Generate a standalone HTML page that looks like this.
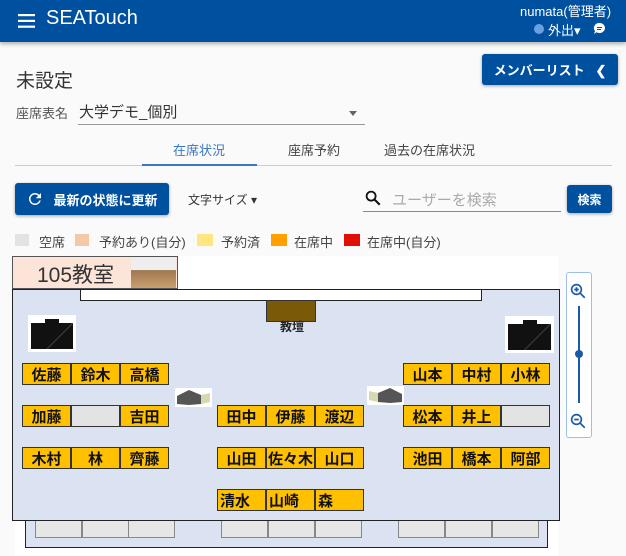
<!DOCTYPE html>
<html><head><meta charset="utf-8"><style>
*{margin:0;padding:0;box-sizing:border-box}
body{width:626px;height:556px;overflow:hidden;background:#fafafa;font-family:"Liberation Sans","Noto Sans CJK JP",sans-serif;position:relative;color:#333}
.a{position:absolute}
.hdr{left:0;top:0;width:626px;height:42px;background:#0050a0;box-shadow:0 2px 4px rgba(0,0,0,.3)}
.btn{background:#0050a0;color:#fff;border-radius:3px;box-shadow:0 1px 3px rgba(0,0,0,.35);font-weight:bold;display:flex;align-items:center;justify-content:center}
.seat{position:absolute;height:22px;width:49px;background:#ffc000;border:1.5px solid #333;font-weight:bold;font-size:15px;color:#111;display:flex;align-items:center;justify-content:center}
.e{background:#e3e3e3}
.lg{position:absolute;top:234px;width:14px;height:12px}
.lt{position:absolute;top:232px;font-size:13px;color:#444}
.bs{position:absolute;height:18px;width:47px;background:#e6e6e6;border:1px solid #888}
.proj{position:absolute;width:37px;height:19px;background:#fff}
</style></head><body>
<div class="a hdr"></div>
<svg class="a" style="left:18px;top:14px" width="17" height="14"><rect y="0" width="17" height="2.2" fill="#fff"/><rect y="5.8" width="17" height="2.2" fill="#fff"/><rect y="11.6" width="17" height="2.2" fill="#fff"/></svg>
<div class="a" style="left:46px;top:7px;color:#fff;font-size:20px">SEATouch</div>
<div class="a" style="left:520px;top:1px;color:#fff;font-size:13px">numata(管理者)</div>
<div class="a" style="left:534px;top:24px;width:10px;height:10px;border-radius:50%;background:#6aa0e0"></div>
<div class="a" style="left:548px;top:20px;color:#fff;font-size:13px">外出▾</div>
<svg class="a" style="left:593px;top:22px" width="13" height="13" viewBox="0 0 13 13"><path d="M6.5 1a5.5 5 0 1 1-3 9.2L1 12l1-3A5.5 5 0 0 1 6.5 1z" fill="#fff"/><path d="M4 5.5h5M4 7.5h4" stroke="#0050a0" stroke-width="1"/></svg>

<div class="a" style="left:16px;top:66px;font-size:19px;color:#333">未設定</div>
<div class="a btn" style="left:482px;top:54px;width:136px;height:31px;font-size:13px">メンバーリスト&nbsp;&nbsp;&nbsp;❮</div>

<div class="a" style="left:16px;top:103px;font-size:13px;color:#555">座席表名</div>
<div class="a" style="left:79px;top:101px;font-size:15px;color:#333">大学デモ_個別</div>
<div class="a" style="left:349px;top:111px;border:4px solid transparent;border-top:5px solid #666"></div>
<div class="a" style="left:78px;top:124px;width:287px;height:1px;background:#999"></div>

<div class="a" style="left:173px;top:140px;font-size:13px;color:#3a78c0">在席状況</div>
<div class="a" style="left:288px;top:140px;font-size:13px;color:#444">座席予約</div>
<div class="a" style="left:384px;top:140px;font-size:13px;color:#444">過去の在席状況</div>
<div class="a" style="left:15px;top:165px;width:597px;height:1px;background:#ccc"></div>
<div class="a" style="left:142px;top:164px;width:115px;height:2px;background:#3a78c0"></div>

<div class="a btn" style="left:15px;top:183px;width:154px;height:32px;font-size:13px">
<svg width="18" height="18" viewBox="0 0 24 24" style="margin-right:9px"><path d="M17.65 6.35A7.96 7.96 0 0 0 12 4a8 8 0 1 0 7.73 10h-2.08A6 6 0 1 1 12 6c1.66 0 3.14.69 4.22 1.78L13 11h7V4z" fill="#fff"/></svg>最新の状態に更新</div>
<div class="a" style="left:188px;top:191px;font-size:12px;color:#333">文字サイズ ▾</div>
<svg class="a" style="left:364px;top:189px" width="18" height="18" viewBox="0 0 24 24"><circle cx="9.5" cy="9.5" r="6" fill="none" stroke="#111" stroke-width="2.4"/><path d="M14 14l7 7" stroke="#111" stroke-width="2.8"/></svg>
<div class="a" style="left:392px;top:189px;font-size:15px;color:#aaa">ユーザーを検索</div>
<div class="a" style="left:363px;top:211px;width:198px;height:1px;background:#888"></div>
<div class="a btn" style="left:567px;top:185px;width:45px;height:28px;font-size:12px">検索</div>

<div class="lg" style="left:15px;background:#e3e3e3"></div>
<div class="lt" style="left:39px">空席</div>
<div class="lg" style="left:75px;background:#f5c8a8"></div>
<div class="lt" style="left:99px">予約あり(自分)</div>
<div class="lg" style="left:197px;background:#ffe680;width:16px"></div>
<div class="lt" style="left:221px">予約済</div>
<div class="lg" style="left:271px;background:#ffa000;width:16px"></div>
<div class="lt" style="left:294px">在席中</div>
<div class="lg" style="left:344px;background:#e01000;width:16px"></div>
<div class="lt" style="left:367px">在席中(自分)</div>

<div class="a" style="left:15px;top:256px;width:543px;height:300px;background:#fff"></div>
<div class="a" style="left:25px;top:500px;width:523px;height:48px;background:#dbe3f3;border:1.5px solid #222"></div>
<div class="bs" style="left:35px;top:520px"></div><div class="bs" style="left:82px;top:520px"></div><div class="bs" style="left:128px;top:520px"></div>
<div class="bs" style="left:221px;top:520px"></div><div class="bs" style="left:268px;top:520px"></div><div class="bs" style="left:315px;top:520px"></div>
<div class="bs" style="left:398px;top:520px"></div><div class="bs" style="left:445px;top:520px"></div><div class="bs" style="left:492px;top:520px"></div>

<div class="a" style="left:12px;top:256px;width:166px;height:33px;background:#fde4d8;border:1px solid #555"></div>
<div class="a" style="left:37px;top:259px;font-size:21px;color:#333">105教室</div>
<div class="a" style="left:131px;top:258px;width:45px;height:30px;background:linear-gradient(#eee 40%,#a07850 41%,#c8a070)"></div>

<div class="a" style="left:12px;top:289px;width:548px;height:232px;background:#dbe3f3;border:1.5px solid #222"></div>
<div class="a" style="left:80px;top:289px;width:402px;height:12px;background:#fff;border:1.5px solid #222"></div>
<div class="a" style="left:266px;top:300px;width:50px;height:22px;background:#7a5a08;border:1px solid #333"></div>
<div class="a" style="left:280px;top:318px;font-size:12px;font-weight:bold;color:#222">教壇</div>

<div class="a" style="left:28px;top:315px;width:48px;height:37px;background:#fff"></div>
<div class="a" style="left:31px;top:323px;width:42px;height:26px;background:linear-gradient(135deg,#111 60%,#444 61%,#111 64%)"></div>
<div class="a" style="left:45px;top:319px;width:14px;height:4px;background:#111"></div>
<div class="a" style="left:505px;top:316px;width:49px;height:37px;background:#fff"></div>
<div class="a" style="left:508px;top:324px;width:43px;height:26px;background:linear-gradient(135deg,#111 60%,#444 61%,#111 64%)"></div>
<div class="a" style="left:523px;top:320px;width:14px;height:4px;background:#111"></div>

<div class="proj" style="left:175px;top:388px"><svg width="37" height="19"><path d="M2 8l12-6 12 5v9l-12 1-12-1z" fill="#555"/><path d="M26 7l9-2v9l-9 2z" fill="#d8d8b0"/></svg></div>
<div class="proj" style="left:367px;top:386px"><svg width="37" height="19"><path d="M35 8l-12-6-12 5v9l12 1 12-1z" fill="#555"/><path d="M11 7l-9-2v9l9 2z" fill="#d8d8b0"/></svg></div>

<div class="seat" style="left:22px;top:363px">佐藤</div><div class="seat" style="left:71px;top:363px">鈴木</div><div class="seat" style="left:120px;top:363px">高橋</div>
<div class="seat" style="left:403px;top:363px">山本</div><div class="seat" style="left:452px;top:363px">中村</div><div class="seat" style="left:501px;top:363px">小林</div>
<div class="seat" style="left:22px;top:405px">加藤</div><div class="seat e" style="left:71px;top:405px"></div><div class="seat" style="left:120px;top:405px">吉田</div>
<div class="seat" style="left:217px;top:405px">田中</div><div class="seat" style="left:266px;top:405px">伊藤</div><div class="seat" style="left:315px;top:405px">渡辺</div>
<div class="seat" style="left:403px;top:405px">松本</div><div class="seat" style="left:452px;top:405px">井上</div><div class="seat e" style="left:501px;top:405px"></div>
<div class="seat" style="left:22px;top:447px">木村</div><div class="seat" style="left:71px;top:447px">林</div><div class="seat" style="left:120px;top:447px">齊藤</div>
<div class="seat" style="left:217px;top:447px">山田</div><div class="seat" style="left:266px;top:447px">佐々木</div><div class="seat" style="left:315px;top:447px">山口</div>
<div class="seat" style="left:403px;top:447px">池田</div><div class="seat" style="left:452px;top:447px">橋本</div><div class="seat" style="left:501px;top:447px">阿部</div>
<div class="seat" style="left:217px;top:489px;justify-content:flex-start;padding-left:2px">清水</div><div class="seat" style="left:266px;top:489px;justify-content:flex-start;padding-left:2px">山崎</div><div class="seat" style="left:315px;top:489px;justify-content:flex-start;padding-left:2px">森</div>

<div class="a" style="left:566px;top:272px;width:26px;height:166px;border:1.5px solid #9ec0e8;border-radius:3px;background:#fff"></div>
<svg class="a" style="left:569px;top:282px" width="18" height="18" viewBox="0 0 24 24"><circle cx="10" cy="10" r="6.5" fill="none" stroke="#1a5aa8" stroke-width="2.2"/><path d="M15 15l6 6M7 10h6M10 7v6" stroke="#1a5aa8" stroke-width="2.2"/></svg>
<div class="a" style="left:578px;top:306px;width:2px;height:97px;background:#1a5aa8"></div>
<div class="a" style="left:575px;top:350px;width:8px;height:8px;border-radius:50%;background:#1a5aa8"></div>
<svg class="a" style="left:569px;top:412px" width="18" height="18" viewBox="0 0 24 24"><circle cx="10" cy="10" r="6.5" fill="none" stroke="#1a5aa8" stroke-width="2.2"/><path d="M15 15l6 6M7 10h6" stroke="#1a5aa8" stroke-width="2.2"/></svg>
</body></html>
